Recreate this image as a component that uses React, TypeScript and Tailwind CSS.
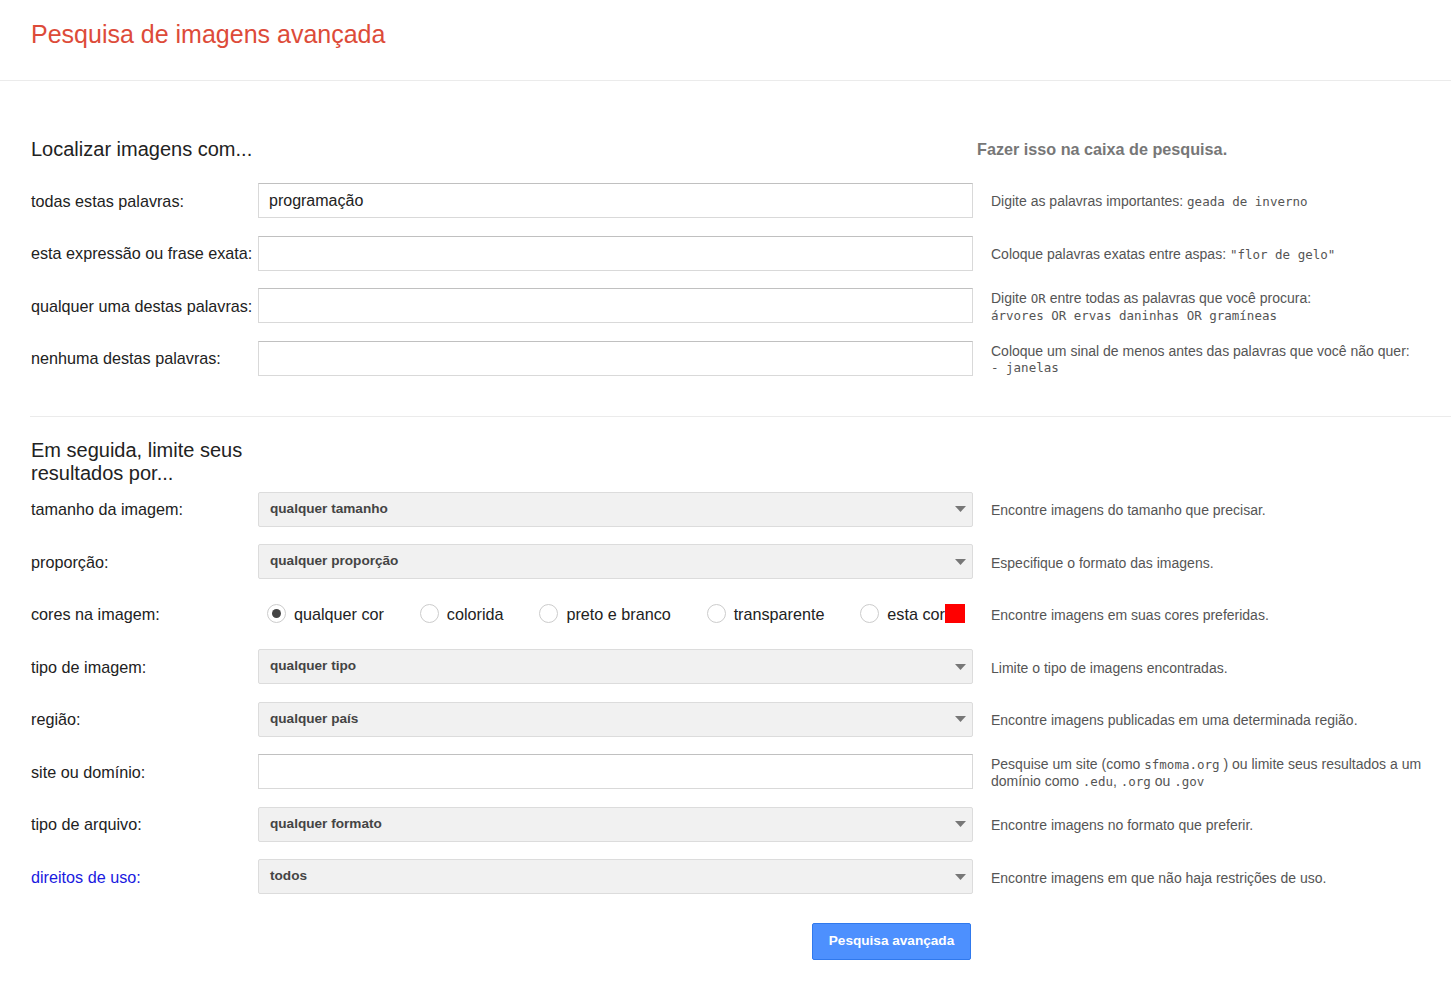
import React from "react";

const mono = "font-['DejaVu_Sans_Mono','Liberation_Mono',monospace] text-[12.5px] leading-[16px]";

function TextInput({ value }: { value?: string }) {
  return (
    <div className="h-[35px] w-[715px] border border-[#d9d9d9] border-t-[#c0c0c0] bg-white flex items-center px-[10px] text-[16px] text-[#222]">
      {value}
    </div>
  );
}

function Select({ value }: { value: string }) {
  return (
    <div className="h-[35px] w-[715px] border border-[#dcdcdc] bg-[#f1f1f1] rounded-[2px] flex items-center justify-between pl-[11px] pr-[6px] text-[13.6px] font-bold text-[#444]">
      <span>{value}</span>
      <svg width="11" height="6" viewBox="0 0 11 6">
        <polygon points="0,0 11,0 5.5,6" fill="#777" />
      </svg>
    </div>
  );
}

function Row({
  label,
  control,
  help,
  labelClass = "text-[#222]",
}: {
  label: string;
  control: React.ReactNode;
  help: React.ReactNode;
  labelClass?: string;
}) {
  return (
    <div className="flex items-center h-[35px] mb-[17.5px]">
      <div className={`w-[227px] shrink-0 text-[16.2px] pt-[1px] ${labelClass}`}>{label}</div>
      <div className="shrink-0">{control}</div>
      <div className="ml-[18px] w-[440px] text-[14px] leading-[16px] text-[#555] pt-[2px]">{help}</div>
    </div>
  );
}

function Radio({ label, checked }: { label: string; checked?: boolean }) {
  return (
    <div className="flex items-center">
      <div className="w-[19px] h-[19px] rounded-full border border-[#cccccc] bg-white flex items-center justify-center">
        {checked && <div className="w-[9px] h-[9px] rounded-full bg-[#444]" />}
      </div>
      <span className="ml-[8px] text-[16.2px] text-[#222]">{label}</span>
    </div>
  );
}

export default function App() {
  return (
    <div className="font-['Liberation_Sans',Arial,sans-serif] bg-white min-h-[982px] w-[1451px]">
      <div className="h-[81px] border-b border-[#ebebeb] px-[31px] pt-[20px]">
        <h1 className="text-[25px] leading-[28px] text-[#dd4b39]">Pesquisa de imagens avançada</h1>
      </div>

      <div className="pl-[31px]">
        <div className="flex items-center mt-[56px] mb-[22px] h-[24px]">
          <div className="w-[946px] text-[20px] leading-[24px] text-[#222]">Localizar imagens com...</div>
          <div className="text-[16.2px] font-bold text-[#777]">Fazer isso na caixa de pesquisa.</div>
        </div>

        <Row
          label="todas estas palavras:"
          control={<TextInput value="programação" />}
          help={
            <>
              Digite as palavras importantes: <span className={mono}>geada de inverno</span>
            </>
          }
        />
        <Row
          label="esta expressão ou frase exata:"
          control={<TextInput />}
          help={
            <>
              Coloque palavras exatas entre aspas: <span className={mono}>"flor de gelo"</span>
            </>
          }
        />
        <Row
          label="qualquer uma destas palavras:"
          control={<TextInput />}
          help={
            <>
              Digite <span className={`${mono} text-[11px]`}>OR</span> entre todas as palavras que você procura:
              <br />
              <span className={mono}>árvores OR ervas daninhas OR gramíneas</span>
            </>
          }
        />
        <Row
          label="nenhuma destas palavras:"
          control={<TextInput />}
          help={
            <>
              Coloque um sinal de menos antes das palavras que você não quer:
              <br />
              <span className={mono}>- janelas</span>
            </>
          }
        />

        <div className="border-t border-[#ebebeb] mt-[40px] -ml-[1px]" />

        <div className="w-[227px] mt-[22px] mb-[7px] text-[20px] leading-[23px] text-[#222]">
          Em seguida, limite seus resultados por...
        </div>

        <Row label="tamanho da imagem:" control={<Select value="qualquer tamanho" />} help="Encontre imagens do tamanho que precisar." />
        <Row label="proporção:" control={<Select value="qualquer proporção" />} help="Especifique o formato das imagens." />
        <Row
          label="cores na imagem:"
          control={
            <div className="w-[715px] h-[35px] flex items-center justify-between pl-[9px] pr-[8px]">
              <Radio label="qualquer cor" checked />
              <Radio label="colorida" />
              <Radio label="preto e branco" />
              <Radio label="transparente" />
              <div className="flex items-center">
                <Radio label="esta cor" />
                <div className="w-[20px] h-[19px] bg-[#ff0000]" />
              </div>
            </div>
          }
          help="Encontre imagens em suas cores preferidas."
        />
        <Row label="tipo de imagem:" control={<Select value="qualquer tipo" />} help="Limite o tipo de imagens encontradas." />
        <Row label="região:" control={<Select value="qualquer país" />} help="Encontre imagens publicadas em uma determinada região." />
        <Row
          label="site ou domínio:"
          control={<TextInput />}
          help={
            <>
              Pesquise um site (como <span className={mono}>sfmoma.org</span> ) ou limite seus resultados a um domínio como{" "}
              <span className={mono}>.edu</span>, <span className={mono}>.org</span> ou <span className={mono}>.gov</span>
            </>
          }
        />
        <Row label="tipo de arquivo:" control={<Select value="qualquer formato" />} help="Encontre imagens no formato que preferir." />
        <Row
          label="direitos de uso:"
          labelClass="text-[#1a1adf]"
          control={<Select value="todos" />}
          help="Encontre imagens em que não haja restrições de uso."
        />

        <div className="w-[940px] flex justify-end mt-[29px]">
          <button className="h-[37px] w-[159px] rounded-[2px] border border-[#3079ed] bg-[#4d90fe] text-white text-[13.6px] font-bold">
            Pesquisa avançada
          </button>
        </div>
      </div>
    </div>
  );
}
